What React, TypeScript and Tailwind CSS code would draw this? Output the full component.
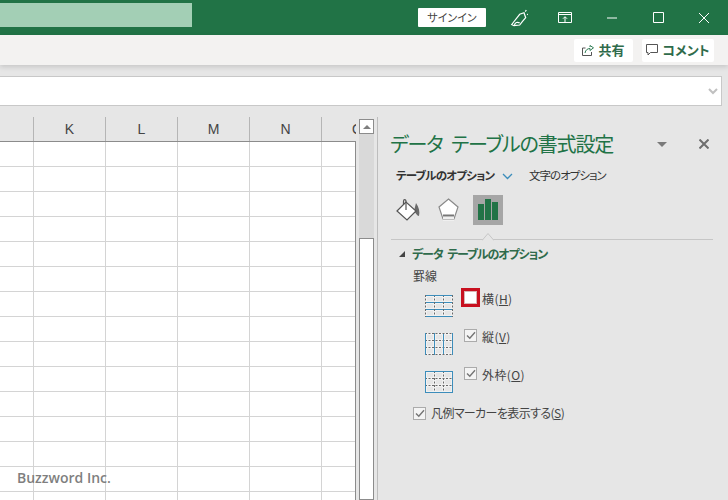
const columns = ["K", "L", "M", "N", "O"];

const GridPreview = ({ h = false, v = false, o = false }: { h?: boolean; v?: boolean; o?: boolean }) => {
  const blue = { stroke: "#3c8dbb" };
  const dash = { stroke: "#6a6a6a", strokeDasharray: "2 1.5" };
  return (
    <svg width="28" height="22" viewBox="0 0 28 22" fill="none" strokeWidth="1">
      <path d="M0 .5H28M0 7.5H28M0 14.5H28M0 21.5H28M.5 0V22M9.5 0V22M18.5 0V22M27.5 0V22" stroke="#ffffff" strokeOpacity=".45" strokeWidth="3" />
      <path d="M0 7.5H28M0 14.5H28" {...(h ? blue : dash)} />
      <path d="M9.5 0V22M18.5 0V22" {...(v ? blue : dash)} />
      <path d="M0 .5H28M0 21.5H28" {...(h || o ? blue : dash)} />
      <path d="M.5 0V22M27.5 0V22" {...(v || o ? blue : dash)} />
    </svg>
  );
};

const CheckBox = ({ checked = false, focus = false }: { checked?: boolean; focus?: boolean }) => (
  <span
    className={`flex h-[13px] w-[13px] shrink-0 items-center justify-center border bg-[#f4f4f4] ${
      focus ? "border-[#d8b4b4] bg-white outline-[3px] outline-solid outline-[#c8101f]" : "border-[#ababab]"
    }`}
  >
    {checked && (
      <svg width="10" height="9" viewBox="0 0 10 9" fill="none" stroke="#757575" strokeWidth="1.4">
        <path d="M1 4.5L3.8 7.3L9 1.2" />
      </svg>
    )}
  </span>
);

const Label = ({ text, hot }: { text: string; hot: string }) => (
  <span className="block whitespace-nowrap text-[12px] leading-4 text-[#444444]">
    {text}(<span className="underline">{hot}</span>)
  </span>
);

const BorderOption = ({ text, hot, checked, focus, h, v, o }: { text: string; hot: string; checked?: boolean; focus?: boolean; h?: boolean; v?: boolean; o?: boolean }) => (
  <div className="flex h-[38px] items-start pl-[34px]">
    <div className="mt-[4px] w-[39px] shrink-0">
      <GridPreview h={h} v={v} o={o} />
    </div>
    <CheckBox checked={checked} focus={focus} />
    <div className="ml-[5px] tracking-[0.4px]">
      <Label text={text} hot={hot} />
    </div>
  </div>
);

export default function App() {
  return (
    <div className="flex h-[500px] w-[728px] flex-col overflow-hidden bg-[#e6e6e6] font-['Noto_Sans_CJK_JP','Noto_Sans',sans-serif] [font-feature-settings:'palt']">
      {/* title bar */}
      <header className="flex h-[35px] shrink-0 items-center bg-[#217346]">
        <div className="mb-[5px] h-6 w-[192px] bg-[#a3cfb5]" />
        <div className="ml-auto flex items-center">
          <button className="flex h-[19px] w-[68px] items-center justify-center rounded-[1px] bg-white text-[11px] text-[#444444]">
            サインイン
          </button>
          <svg className="ml-[24px]" width="18" height="18" viewBox="0 0 18 18" fill="none" stroke="#ffffff" strokeWidth="1.2">
            <path d="M1.7 15.5L9.7 5.3L14 3.7L15.7 8.7L12.3 12.7L9.7 16L4 16.7Z" />
            <path d="M4.5 16C5 13.5 7.5 12.5 9.7 14" />
            <path d="M15.3 2.6L16.3 1M17 5.6L18 5.2" />
          </svg>
          <svg className="ml-[30px]" width="14" height="12" viewBox="0 0 14 12" fill="none" stroke="#ffffff" strokeWidth="1">
            <path d="M.5 .5H13.5V10.5H.5ZM.5 2.5H13.5" />
            <path d="M7 10V5M5 6.7L7 4.7L9 6.7" />
          </svg>
          <svg className="ml-[35px]" width="10" height="2" viewBox="0 0 10 2" stroke="#ffffff">
            <path d="M0 1H10" />
          </svg>
          <svg className="ml-[36px]" width="11" height="11" viewBox="0 0 11 11" fill="none" stroke="#ffffff">
            <path d="M.5 .5H10.5V10.5H.5Z" />
          </svg>
          <svg className="ml-[35px] mr-[19px]" width="10" height="10" viewBox="0 0 10 10" stroke="#ffffff">
            <path d="M0 0L10 10M10 0L0 10" />
          </svg>
        </div>
      </header>

      {/* ribbon strip */}
      <div className="z-10 flex h-[30px] shrink-0 items-center justify-end gap-[9px] bg-[#f3f2f1] pr-[14px] shadow-[0_2px_5px_rgba(0,0,0,0.14)]">
        <button className="flex h-[23px] w-[59px] items-center justify-center gap-[4px] rounded-[2px] bg-white text-[13px] font-bold text-[#2f6b4b]">
          <svg width="12" height="11" viewBox="0 0 12 11" fill="none" stroke="#555555" strokeWidth="1">
            <path d="M3.5 3H.5V10.5H9.5V7" />
            <path d="M3 8C3.5 5 5.5 3.5 8 3.5V5.5L11.5 2.8L8 .5V2" stroke="#2f7d55" />
          </svg>
          共有
        </button>
        <button className="flex h-[23px] w-[72px] items-center justify-center gap-[4px] rounded-[2px] bg-white text-[13px] font-bold text-[#2f6b4b]">
          <svg width="12" height="12" viewBox="0 0 12 12" fill="none" stroke="#555555" strokeWidth="1">
            <path d="M.5 .5H11.5V8.5H4.5L2 11V8.5H.5Z" />
          </svg>
          コメント
        </button>
      </div>

      {/* formula bar */}
      <div className="mt-[11px] flex h-[30px] w-[722px] shrink-0 items-center justify-end border-y border-r border-[#c8c8c8] bg-white pr-[3px]">
        <svg width="10" height="7" viewBox="0 0 10 7" fill="none" stroke="#c0c0c0" strokeWidth="2">
          <path d="M1 1L5 5L9 1" />
        </svg>
      </div>

      <div className="mt-[11px] flex min-h-0 flex-1">
        {/* sheet */}
        <section className="flex w-[356px] shrink-0 flex-col">
          <div className="flex h-[25px] shrink-0 overflow-hidden border-b border-[#8c8c8c]">
            <div className="w-[33px] shrink-0" />
            {columns.map((c) => (
              <div key={c} className="w-[72px] shrink-0 border-l border-[#b5b5b5] pt-[2px] text-center font-['Liberation_Sans',sans-serif] text-[14px] leading-5 text-[#444444]">
                {c}
              </div>
            ))}
          </div>
          <div className="relative min-h-0 flex-1 overflow-hidden border-r border-[#8c8c8c] bg-white">
            {Array.from({ length: 15 }).map((_, r) => (
              <div key={r} className="flex h-[25px] border-b border-[#d4d4d4]">
                <div className="w-[33px] shrink-0" />
                {columns.map((c) => (
                  <div key={c} className="w-[72px] shrink-0 border-l border-[#d4d4d4]" />
                ))}
              </div>
            ))}
            <span className="absolute left-[17px] top-[326px] font-['Open_Sans',sans-serif] text-[14px] font-semibold leading-5 text-[#7f7f7f]">
              Buzzword Inc.
            </span>
          </div>
        </section>

        {/* vertical scrollbar */}
        <div className="flex w-[21px] shrink-0 flex-col pl-[3px] pr-[3px] pt-[2px]">
          <div className="flex h-[15px] w-[15px] shrink-0 items-center justify-center border border-[#8c8c8c] bg-white">
            <span className="h-0 w-0 border-x-[4px] border-b-[4px] border-x-transparent border-b-[#7f7f7f]" />
          </div>
          <div className="h-[104px] w-[15px] shrink-0 bg-[#d9d9d9]" />
          <div className="w-[15px] flex-1 border border-[#8c8c8c] bg-white" />
        </div>

        {/* task pane */}
        <aside className="flex-1 border-l border-[#bdbdbd] pl-[13px] pr-[15px] pt-[13px]">
          <div className="flex h-[28px] items-center">
            <h2 className="-ml-[1px] whitespace-nowrap text-[20px] leading-7 tracking-[-1.1px] text-[#217346] [word-spacing:5px]">データ テーブルの書式設定</h2>
            <span className="ml-auto h-0 w-0 border-x-[5px] border-t-[5px] border-x-transparent border-t-[#7a7a7a]" />
            <svg className="ml-[32px] mr-[4px]" width="10" height="10" viewBox="0 0 10 10" stroke="#6e6e6e" strokeWidth="2">
              <path d="M.5 .5L9.5 9.5M9.5 .5L.5 9.5" />
            </svg>
          </div>

          <div className="mt-[8px] flex h-[20px] items-center pl-[5px] text-[#333333]">
            <span className="w-[106px] shrink-0 whitespace-nowrap text-[11.5px] font-bold tracking-[-0.8px]">テーブルのオプション</span>
            <svg width="11" height="7" viewBox="0 0 11 7" fill="none" stroke="#3c8dbb" strokeWidth="1.3">
              <path d="M1 1L5.5 5.5L10 1" />
            </svg>
            <span className="ml-[16px] whitespace-nowrap text-[11.5px] tracking-[-1px]">文字のオプション</span>
          </div>

          <div className="mt-[9px] flex h-[30px] items-center">
            <svg className="ml-[5px]" width="24" height="24" viewBox="0 0 24 24">
              <path d="M20 5C23 9 24 14 23 18C21 18 20 15 18 13Z" fill="#6a6a6a" />
              <path d="M1 13L10 4L20 13L11 22Z" fill="#ffffff" stroke="#555555" strokeWidth="1.2" />
              <path d="M10 12V3.5C10 1 7.5 1 7.5 3.5V7" fill="none" stroke="#555555" strokeWidth="1.2" />
            </svg>
            <svg className="ml-[18px]" width="21" height="24" viewBox="0 0 21 24">
              <path d="M5 19H16V23H5Z" fill="#f0f0f0" />
              <path d="M10.5 1L20 9L16 21H5L1 9Z" fill="#ffffff" stroke="#8a8a8a" strokeWidth="1.2" />
              <path d="M5 17.5H16" stroke="#777777" strokeWidth="2" />
              <path d="M5 19H16V21H5Z" fill="#f0f0f0" />
            </svg>
            <div className="ml-[14px] flex h-[30px] w-[30px] items-end justify-center gap-px bg-[#a6a6a6] pb-[5px]">
              <span className="h-[16px] w-[6px] bg-[#217346]" />
              <span className="h-[21px] w-[6px] bg-[#217346]" />
              <span className="h-[18px] w-[6px] bg-[#217346]" />
            </div>
          </div>

          <div className="relative mt-[14px] h-px bg-[#c6c6c6]">
            <svg className="absolute bottom-[-1px] left-[91px]" width="12" height="8" viewBox="0 0 12 8" fill="#e6e6e6" stroke="#c6c6c6">
              <path d="M0 7.5L6 .5L12 7.5" />
            </svg>
          </div>

          <div className="mt-[6px] flex h-[16px] items-center pl-[8px]">
            <svg width="6" height="6" viewBox="0 0 6 6" fill="#444444">
              <path d="M6 0V6H0Z" />
            </svg>
            <span className="ml-[7px] whitespace-nowrap text-[12px] font-bold leading-4 tracking-[-1.1px] text-[#2f6b4b] [word-spacing:3px]">データ テーブルのオプション</span>
          </div>

          <div className="mt-[6px] h-[16px] pl-[22px] text-[12px] leading-4 text-[#444444]">罫線</div>

          <div className="mt-[7px]">
            <BorderOption text="横" hot="H" focus h />
            <BorderOption text="縦" hot="V" checked v />
            <BorderOption text="外枠" hot="O" checked o />
          </div>

          <div className="flex items-center pl-[22px]">
            <CheckBox checked />
            <div className="ml-[5px] tracking-[-0.6px]">
              <Label text="凡例マーカーを表示する" hot="S" />
            </div>
          </div>
        </aside>
      </div>
    </div>
  );
}
